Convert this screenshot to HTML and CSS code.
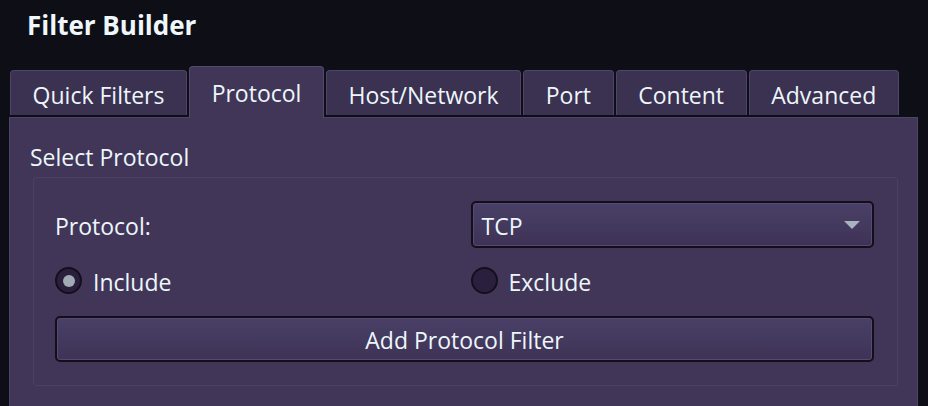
FILE: index.html
```html
<!DOCTYPE html>
<html lang="en">
<head>
<meta charset="utf-8">
<title>Filter Builder</title>
<link rel="stylesheet" href="styles.css">
</head>
<body>
<div class="app">
  <header class="header">
    <h1 class="title">Filter Builder</h1>
  </header>
  <nav class="tabs">
    <div class="tab">Quick Filters</div>
    <div class="tab active">Protocol</div>
    <div class="tab">Host/Network</div>
    <div class="tab">Port</div>
    <div class="tab">Content</div>
    <div class="tab">Advanced</div>
  </nav>
  <section class="pane">
    <div class="group-title">Select Protocol</div>
    <div class="group">
      <div class="form">
        <div class="field-label">Protocol:</div>
        <div class="combo">
          <span class="combo-text">TCP</span>
          <svg class="combo-arrow" width="16" height="8" viewBox="0 0 16 8"><polygon points="0,0 16,0 8,8" fill="#a9b2bd"/></svg>
        </div>
        <label class="radio"><span class="radio-dot checked"></span><span class="radio-text">Include</span></label>
        <label class="radio"><span class="radio-dot"></span><span class="radio-text">Exclude</span></label>
        <button class="btn" type="button">Add Protocol Filter</button>
      </div>
    </div>
  </section>
</div>
</body>
</html>
```
FILE: styles.css
```css
* { box-sizing: border-box; }
html, body {
  margin: 0;
  padding: 0;
  background: #0e0e17;
  height: 100%;
  overflow: hidden;
}
body {
  font-family: "Open Sans", "Noto Sans", sans-serif;
  font-size: 23px;
  color: #ecf6fb;
}
.app {
  width: 928px;
  height: 406px;
}
.header {
  height: 66px;
  padding: 7px 0 0 27px;
}
.title {
  margin: 0;
  font-size: 26px;
  font-weight: 700;
  line-height: normal;
  color: #eef8fc;
}
.tabs {
  display: flex;
  align-items: flex-end;
  gap: 2px;
  height: 51px;
  margin-left: 10px;
}
.tab {
  height: 45px;
  margin-bottom: 2px;
  padding: 4px 21.6px 0;
  display: flex;
  align-items: center;
  background: #3b3151;
  border: 1px solid #4f4568;
  border-bottom: none;
  border-radius: 4px 4px 0 0;
  white-space: nowrap;
}
.tab.active {
  height: 52px;
  margin-bottom: -1px;
  padding-top: 1px;
  background: #413658;
  border-color: #54496e;
  position: relative;
  z-index: 1;
}
.pane {
  margin-left: 9px;
  width: 909px;
  height: 289px;
  background: #413658;
  border: 1px solid #4e4467;
  border-bottom: none;
  padding: 23px 19px 0 20px;
}
.group-title {
  line-height: normal;
  height: 36px;
}
.group {
  margin-left: 3px;
  border: 1px solid #4a4062;
  border-radius: 3px;
  padding: 23px 23px 23px 21px;
}
.form {
  display: grid;
  grid-template-columns: 1fr 1fr;
  column-gap: 12px;
}
.field-label {
  display: flex;
  align-items: center;
  padding-top: 2px;
  height: 47px;
}
.combo {
  height: 47px;
  display: flex;
  align-items: center;
  justify-content: space-between;
  padding: 2px 12px 0 9px;
  border: 2px solid #130e1c;
  border-radius: 5px;
  background: linear-gradient(#4a3f66, #3e3356);
  box-shadow: inset 0 0 0 1px #554a70;
}
.combo-arrow {
  margin-top: -2px;
  display: block;
}
.radio {
  margin-top: 19px;
  height: 27px;
  display: flex;
  align-items: center;
}
.radio-dot {
  width: 27px;
  height: 27px;
  flex: none;
  border-radius: 50%;
  border: 2px solid #140f1e;
  background: #2a1f3d;
  display: flex;
  align-items: center;
  justify-content: center;
}
.radio-dot.checked::after {
  content: "";
  width: 12px;
  height: 12px;
  border-radius: 50%;
  background: #a2aab3;
}
.radio-text {
  margin-left: 11px;
  padding-top: 2px;
}
.btn {
  grid-column: 1 / -1;
  margin-top: 22px;
  height: 46px;
  padding: 2px 0 0;
  font: inherit;
  color: inherit;
  border: 2px solid #130e1c;
  border-radius: 5px;
  background: linear-gradient(#4a3f66, #3e3356);
  box-shadow: inset 0 0 0 1px #554a70;
  display: flex;
  align-items: center;
  justify-content: center;
}
```
